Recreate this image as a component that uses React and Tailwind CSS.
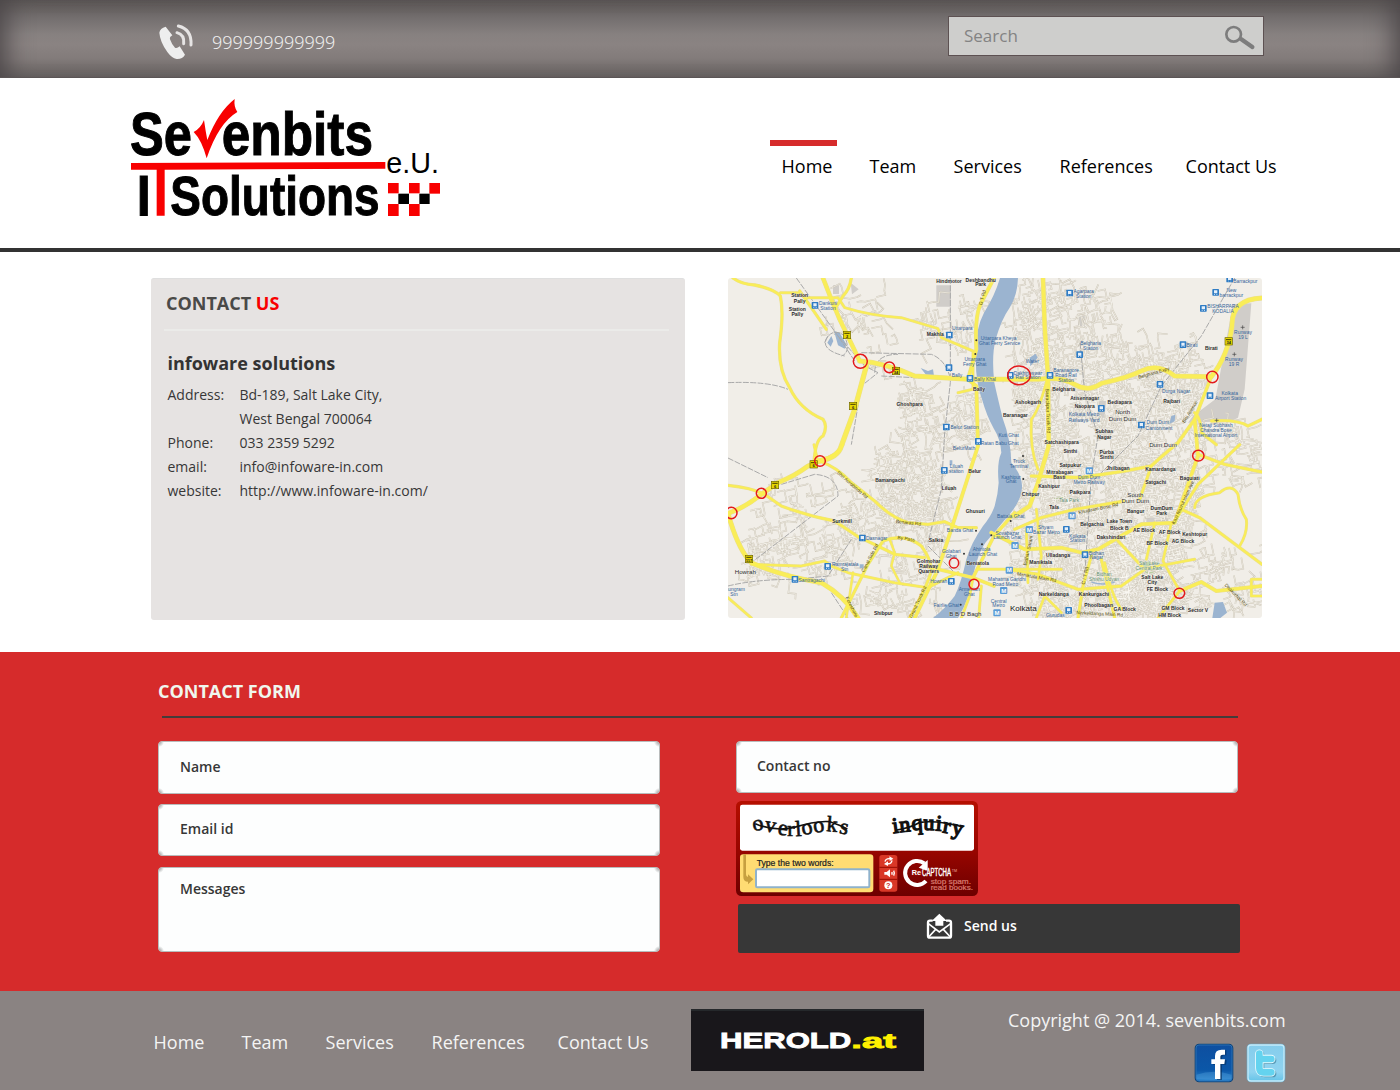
import React from "react";

const SANS = "'Liberation Sans', Arial, sans-serif";

function Logo() {
  return (
    <svg className="block h-[150px] w-[350px]" viewBox="0 0 1050 450" fontFamily={SANS}>
      <defs>
        <clipPath id="logoClip"><rect x="63" y="50" width="927" height="358" /></clipPath>
      </defs>
      <g clipPath="url(#logoClip)">
        <g fontWeight="bold" fontSize="184" fill="#000" stroke="#000" strokeWidth="3">
          <text x="60" y="226" textLength="186" lengthAdjust="spacingAndGlyphs">Se</text>
          <text x="335" y="226" textLength="454" lengthAdjust="spacingAndGlyphs">enbits</text>
          <text x="80" y="407" fontSize="174" textLength="42" lengthAdjust="spacingAndGlyphs">I</text>
          <text x="181" y="405" fontSize="169" textLength="628" lengthAdjust="spacingAndGlyphs">Solutions</text>
        </g>
        <path d="M251 156 Q272 145 282 120 Q287 155 292 180 Q325 95 374 57 Q371 80 382 96 Q325 130 290 235 Q275 180 251 156Z" fill="#f80000" />
        <path d="M63 249 L826 246 V266 L164 269 V407 H140 V269 H63Z" fill="#f80000" />
        <text x="829" y="280" fontSize="86" textLength="158" lengthAdjust="spacingAndGlyphs">e.U.</text>
        <g fill="#f80000">
          <rect x="834" y="309" width="32" height="31" /><rect x="897" y="309" width="32" height="31" /><rect x="958" y="309" width="32" height="32" />
          <rect x="834" y="372" width="32" height="36" /><rect x="897" y="372" width="32" height="36" />
        </g>
        <g fill="#000"><rect x="865" y="341" width="32" height="31" /><rect x="928" y="341" width="31" height="31" /></g>
      </g>
    </svg>
  );
}

// Map space: 1602 x 1020, three units to a screen pixel.
const STREET_ZONES = [
  [510, 320, 740, 510, 80], [400, 560, 640, 760, 80], [30, 760, 330, 900, 70], [330, 700, 640, 990, 90],
  [580, 70, 740, 220, 30], [400, 60, 500, 300, 10], [850, 20, 960, 1010, 190], [930, 40, 1150, 500, 180],
  [930, 500, 1200, 1010, 300], [1140, 200, 1400, 520, 190], [1200, 520, 1390, 760, 130], [1110, 760, 1370, 1010, 180],
  [1370, 800, 1600, 1000, 40], [430, 500, 620, 640, 40], [280, 60, 400, 160, 15], [1360, 420, 1590, 620, 50], [60, 590, 380, 760, 30],
];

function makeStreets() {
  let seed = 17;
  const rnd = () => { seed = (seed * 16807) % 2147483647; return seed / 2147483647; };
  let d = "";
  for (const [x0, y0, x1, y1, n] of STREET_ZONES) {
    for (let i = 0; i < n; i++) {
      let x = x0 + rnd() * (x1 - x0), y = y0 + rnd() * (y1 - y0);
      let a = -0.2 + (rnd() > 0.5 ? Math.PI / 2 : 0);
      d += `M${x.toFixed(0)} ${y.toFixed(0)}`;
      for (let k = 0; k < 4; k++) {
        const l = 8 + rnd() * 26;
        x += Math.cos(a) * l; y += Math.sin(a) * l;
        d += `L${x.toFixed(0)} ${y.toFixed(0)}`;
        a += (rnd() > 0.5 ? 1 : -1) * (rnd() > 0.3 ? Math.PI / 2 : 0.3);
      }
    }
  }
  return d;
}
const STREETS = makeStreets();

const RIVER = "M816 6 Q800 60 768 110 Q742 160 744 230 Q740 310 762 370 Q776 420 796 455 Q818 490 820 530 Q806 560 812 620 Q810 655 800 690 Q790 720 765 750 Q730 800 715 850 Q700 920 680 960 Q650 1000 615 1026 H690 Q725 970 735 900 Q750 830 772 800 Q815 750 838 722 Q878 680 882 635 Q884 600 850 560 Q848 490 825 430 Q810 370 799 320 Q790 240 803 190 Q820 130 845 95 Q868 60 870 6Z";

const ROADS = [
  ["M15 6 Q40 25 80 27 Q140 40 157 60 Q168 110 155 200 Q150 280 185 335 Q215 400 285 430 Q300 450 285 480 Q262 490 258 560", 9],
  ["M285 6 L310 70 L335 130 L395 255", 13],
  ["M370 6 Q365 40 345 60 L320 100", 9],
  ["M157 50 H210 L230 65 H330 L350 95 Q430 120 520 125 L630 158 L640 185 L735 225", 8],
  ["M215 45 L250 95 L295 160", 9],
  ["M395 255 Q470 260 560 300 L720 310 H930 Q1000 300 1040 325 Q1080 350 1120 322 Q1200 305 1240 285 Q1290 260 1340 300 L1450 302 Q1500 240 1512 150 Q1510 70 1602 66", 14],
  ["M415 270 L380 400 L340 510 Q330 545 275 555", 15],
  ["M275 555 L240 570 Q200 600 150 620 L100 655 Q50 695 0 712 Q30 820 70 860 Q160 900 280 920 Q350 960 390 1026", 14],
  ["M275 555 Q330 575 370 620 L440 675 Q490 725 540 740 L600 745 L650 737 L690 755 H745", 9],
  ["M0 628 Q70 635 110 655 L160 690 Q240 720 320 735 L390 782 Q440 805 500 835 L590 845", 9],
  ["M70 865 L220 870 L290 855 L310 870 L360 890 L500 920 L600 935 L690 890", 8],
  ["M340 1026 L420 865 L465 795 Q530 770 580 810 Q610 850 610 885 Q600 925 545 1026", 9],
  ["M355 1026 L375 890 M485 790 L500 830 L490 870 L515 920", 7],
  ["M798 6 Q775 50 755 90 Q740 130 745 220 L720 310 L745 330 L750 510 L660 790 L630 880 L560 1026", 11],
  ["M735 230 L735 340 L690 350", 8],
  ["M945 6 L950 150 L960 300 L962 510 L930 620 L905 690 L860 720", 13],
  ["M960 300 Q935 400 910 430 Q905 520 930 580", 8],
  ["M590 870 L735 905 L798 930 M735 905 L798 780 L860 710", 10],
  ["M735 905 L725 960 L700 1026 M750 880 H1000 M760 930 L752 1026", 8],
  ["M910 600 L1060 605 L1190 585 L1270 570 Q1290 550 1350 500 L1400 430 L1450 302", 10],
  ["M860 760 L940 725 L1040 700 L1190 675 M1270 570 L1235 670", 9],
  ["M790 770 L890 820 L1000 815 L1060 830 L1110 820 L1240 745 L1340 740 L1410 540 L1400 430", 11],
  ["M925 700 L940 840 L930 910 M895 760 L900 920", 8],
  ["M840 880 L930 895 L1050 940 L1180 930 L1250 880 L1170 795", 9],
  ["M1090 840 L1065 930 L1050 1026 M1120 850 L1160 1026", 9],
  ["M1240 880 L1400 850 M1280 740 L1255 850 M1330 740 L1305 855 L1355 945 L1290 1026", 8],
  ["M1355 945 L1420 918 L1465 945 L1602 930", 11],
  ["M1340 735 L1410 625 L1535 506 M1410 535 L1490 565 L1602 588", 9],
  ["M1360 700 L1415 725 L1602 865", 9],
  ["M1400 695 Q1400 660 1475 650 Q1510 620 1530 655 Q1535 700 1555 730 Q1560 770 1535 810", 8],
  ["M1400 410 Q1420 430 1420 470 L1465 506", 9],
  ["M1450 435 Q1530 430 1560 450 L1602 430", 9],
  ["M1602 910 H1570 V960 H1602 M258 506 L268 550 M345 506 Q325 540 280 550", 8],
  ["M0 965 L70 1026 M925 1026 L950 960 L1000 1010 M1130 860 Q1150 960 1180 1000", 8],
];

const RAILS = [
  "M205 6 L330 180 L380 255 M330 180 L410 270 L450 290 L400 330 L370 506",
  "M667 6 V320 L650 470 L640 640 L600 800 M400 230 L610 235 Q650 250 665 300",
  "M290 200 Q310 150 350 180 Q370 230 340 240 M300 180 Q270 220 350 240 M440 290 Q440 235 510 235",
  "M0 546 L120 605 M160 625 L260 595 Q330 600 330 660 L70 860 M0 930 Q80 910 200 910 L300 900 L370 790",
  "M1056 200 L1070 350 L1110 480 L1090 600 L1070 900 L1055 1026",
  "M1520 6 L1420 180 L1300 330 L1230 480 L1090 620",
  "M600 810 L690 900 M460 300 L560 305 L720 312 M0 320 Q120 315 180 340 M310 950 L360 1026",
];

// Each label: x, y of its baseline centre, text, kind (s station, p place, m/b larger place, r road, g park), rotation
const LABELS = [
  [215, 63, "Station", "p"], [215, 80, "Pally", "p"], [208, 104, "Station", "p"], [208, 119, "Pally", "p"],
  [300, 86, "Dankuni", "s"], [300, 102, "Station", "s"], [663, 22, "Hindmotor", "p"], [758, 17, "Deshbandhu", "p"], [758, 30, "Park", "p"],
  [768, 66, "G T Rd", "r", -75], [622, 180, "Makhla", "p"], [703, 163, "Uttarpara", "s"], [812, 191, "Uttarpara Kheya", "s"], [815, 206, "Ghat Ferry Service", "s"],
  [740, 256, "Uttarpara", "s"], [740, 271, "Ferry Ghat", "s"], [687, 303, "Bally", "s"], [771, 315, "Bally Khal", "s"], [753, 346, "Bally", "p"],
  [545, 390, "Ghoshpara", "p"], [710, 459, "Belur Station", "s"],
  [1067, 51, "Agarpara", "s"], [1067, 66, "Station", "s"], [1552, 21, "Barrackpur", "s"], [1510, 48, "New", "s"], [1510, 63, "barrackpur", "s"],
  [1485, 95, "BISHARPARA", "s"], [1485, 111, "KODALIA", "s"], [1545, 175, "Runway", "s"], [1545, 189, "19 L", "s"], [1518, 256, "Runway", "s"], [1518, 270, "19 R", "s"],
  [1088, 207, "Belgharia", "s"], [1088, 222, "Station", "s"], [1392, 214, "Birati", "s"], [1450, 223, "Birati", "p"], [913, 260, "Water", "s"],
  [900, 296, "Dakhineswar", "s"], [900, 310, "Rail Station", "s"], [1014, 288, "Baranagore", "s"], [1014, 303, "Road Rail", "s"], [1014, 318, "Station", "s"],
  [1007, 345, "Belgharia", "p"], [900, 385, "Ashokgarh", "p"], [862, 424, "Baranagar", "p"], [842, 482, "Kuti Ghat", "s"], [815, 506, "Ratan Babu Ghat", "s"],
  [1070, 371, "Atisennagar", "p"], [1070, 397, "Naopara", "p"], [1068, 421, "Kolkata Metro", "s"], [1068, 437, "Railways Yard", "s"], [1175, 383, "Bediapara", "p"],
  [1184, 414, "North", "m"], [1184, 434, "Dum Dum", "m"], [1129, 472, "Subhas", "p"], [1129, 488, "Nagar", "p"], [1001, 504, "Satchashipara", "p"],
  [1289, 445, "Dum Dum", "s"], [1293, 462, "Cantonment", "s"], [1344, 351, "Durga Nagar", "s"], [1331, 381, "Rajbari", "p"], [1505, 357, "Kolkata", "s"], [1508, 371, "Airport Station", "s"],
  [1464, 454, "Netaji Subhash", "s"], [1464, 469, "Chandra Bose", "s"], [1464, 484, "International Airport", "s"], [1305, 512, "Dum Dum", "m"],
  [1279, 295, "Belgharia Expy", "r", -16], [955, 405, "Barrackpur Trunk Rd", "r", 88], [1390, 410, "Bisi Avenue", "r", -58],
  [708, 521, "BelurMath", "s"], [740, 591, "Belur", "p"], [685, 577, "Liluah", "s"], [685, 592, "station", "s"], [663, 641, "Liluah", "p"],
  [486, 618, "Bamangachi", "p"], [370, 630, "Shri Aurobindo Rd", "r", 41], [342, 741, "Surkmill", "p"], [742, 710, "Ghusuri", "p"], [541, 745, "Benaras Rd", "r", 6],
  [696, 768, "Banda Ghat", "s"], [446, 791, "Dasnagar", "s"], [534, 793, "By Pass", "r", 8], [624, 799, "Salkia", "p"], [430, 848, "Canal Side Rd", "r", -62],
  [602, 860, "Golmohar", "p"], [602, 876, "Railway", "p"], [602, 892, "Quarters", "p"], [670, 832, "Golabari", "s"], [670, 847, "Ghat", "s"],
  [761, 826, "Ahiritola", "s"], [765, 841, "Launch Ghat", "s"], [749, 867, "Beniatola", "p"], [352, 870, "Ramrajatala", "s"], [350, 885, "Stn", "s"],
  [52, 893, "Howrah", "m"], [251, 917, "Santragachi", "s"], [18, 944, "Jaungram", "s"], [18, 959, "Stn", "s"], [632, 922, "Howrah", "s"], [724, 945, "Armenian", "s"], [724, 960, "Ghat", "s"],
  [574, 980, "Grand Trunk Rd", "r", -65], [655, 992, "Fairlie Ghat", "s"], [466, 1018, "Shibpur", "p"], [712, 1021, "B B D Bagh", "m"],
  [1027, 530, "Sinthi", "p"], [1136, 533, "Purba", "p"], [1136, 549, "Sinthi", "p"], [1027, 572, "Satpukur", "p"], [995, 595, "Mitrabagan", "p"], [994, 610, "Basti", "p"],
  [873, 561, "Truck", "s"], [873, 575, "Terminal", "s"], [849, 608, "Kashipur", "s"], [849, 622, "Ghat", "s"], [963, 635, "Kashipur", "p"], [908, 661, "Chitpur", "p"],
  [1083, 610, "Dum Dum", "s"], [1083, 624, "Metro Railway", "s"], [1170, 581, "Jhilbagan", "p"], [1297, 586, "Kamardanga", "p"], [1283, 623, "Satgachi", "p"], [1385, 611, "Baguiati", "p"],
  [1056, 654, "Paikpara", "p"], [1222, 662, "South", "m"], [1222, 681, "Dum Dum", "m"], [1023, 679, "Tala Park", "g"], [978, 699, "Tala", "p"], [1112, 702, "Khudiram Bose Rd", "r", -12],
  [1223, 710, "Bangur", "p"], [1301, 701, "DumDum", "p"], [1301, 717, "Park", "p"], [848, 725, "Battala Ghat", "s"], [1092, 750, "Belgachia", "p"], [1174, 741, "Lake Town", "p"], [1174, 762, "Block B", "p"],
  [953, 760, "Shyam", "s"], [955, 775, "Bazar Metro", "s"], [1048, 785, "Kolkata", "s"], [1048, 799, "Station", "s"], [838, 776, "Sovabazar", "s"], [838, 790, "Launch Ghat", "s"],
  [1149, 789, "Dakshindari", "p"], [1248, 769, "AE Block", "p"], [1325, 774, "AF Block", "p"], [1400, 779, "Keshtopur", "p"], [1288, 807, "BF Block", "p"], [1365, 801, "AG Block", "p"],
  [990, 842, "Ulladanga", "p"], [1105, 836, "Bidhan", "s"], [1105, 850, "Nagar", "s"], [938, 864, "Maniktala", "p"], [1128, 899, "Bidhan", "g"], [1128, 914, "Shishu Udyan", "g"],
  [1263, 868, "Salt Lake", "g"], [1263, 883, "Central Park", "g"], [1273, 908, "Salt Lake", "p"], [1273, 924, "City", "p"], [1288, 945, "FE Block", "p"],
  [925, 908, "Maniktala Main Rd", "r", 10], [837, 915, "Mahatma Gandhi", "s"], [832, 930, "Road Metro", "s"], [977, 960, "Narkeldanga", "p"], [1098, 959, "Kankurgachi", "p"],
  [1076, 900, "C I T Rd", "r", -77], [1369, 682, "Kazi Nazrul Islam Ave", "r", -65], [886, 1005, "Kolkata", "b"], [1112, 992, "Phoolbagan", "p"], [1190, 1005, "GA Block", "p"],
  [1335, 1002, "GM Block", "p"], [1410, 1008, "Sector V", "p"], [982, 1022, "Gurudas", "s"], [1115, 1018, "Narkeldanga Main Rd", "r", 3], [1325, 1022, "HM Block", "p"], [812, 980, "Central", "s"], [812, 994, "Metro", "s"],
  [905, 825, "Bidhan Sarani", "r", -78], [1520, 960, "Dhakurhat Rd", "r", 45], [367, 995, "Foreshore", "r", 63],
];

const LABEL_FILL = { s: "#35649a", p: "#2b2b2b", m: "#2b2b2b", b: "#111", r: "#574f14", g: "#5a8a6c" };
const LABEL_SIZE = { s: 14.8, p: 15, m: 18.5, b: 24, r: 14.5, g: 14.5 };

const STATIONS = [
  [261, 88], [664, 177], [663, 275], [726, 307], [655, 453], [751, 496], [1025, 51], [1463, 49], [1505, 9], [1426, 97], [1055, 236], [1365, 206], [847, 298], [966, 298],
  [1120, 397], [1240, 447], [1296, 325], [1446, 359], [649, 583], [403, 786], [299, 871], [201, 910], [670, 916], [1015, 760], [1071, 836], [1022, 1003],
];
const METROS = [[1084, 584], [1032, 719], [904, 760], [861, 808], [844, 882], [827, 943], [807, 1010]];
const SHIELDS = [[357, 177, "2"], [504, 285, "34"], [375, 390, "6"], [1502, 196, "34"], [257, 565, "6"], [141, 627, "6"], [63, 849, "117"]];
const RINGS = [[397, 256, 21, 21], [484, 274, 16, 16], [873, 298, 34, 28], [1453, 303, 17, 17], [1411, 539, 17, 16], [276, 555, 16, 16], [100, 652, 15, 15], [10, 711, 17, 17], [678, 861, 14, 15], [738, 925, 15, 15], [1354, 952, 16, 15]];

function CityMap() {
  return (
    <svg className="block h-[340px] w-[534px] rounded-[3px]" viewBox="0 6 1602 1020" fontFamily={SANS}>
      <rect y="6" width="1602" height="1020" fill="#f1eee8" />
      <g fill="#d0cdc9">
        <path d="M1515 85 L1570 82 L1550 340 L1530 425 L1510 435 L1380 440 L1395 420 L1462 370Z" />
        <path d="M625 28h44v64h-44z M315 28h18v26h-18z M368 20l24 20-20 15z M1050 120l20 0v35l-20-8z M1108 375h26l-4 50h-20z M1255 725h70v18h-70z" />
      </g>
      <path d="M1025 680h35v28h-35z" fill="#ddd0ae" />
      <g fill="#b8d3a0"><path d="M978 660h40v16h-40z M1236 857h62l4 22-30 18-36-12z" /></g>
      <path d={STREETS} fill="none" stroke="#c8c1b1" strokeWidth="4.6" />
      <path d={STREETS} fill="none" stroke="#fbfaf5" strokeWidth="1.8" />
      <g fill="#9bb4d0">
        <path d={RIVER} />
        <path d="M318 165 L335 170 L355 205 L350 218 L330 208Z M298 200 L310 180 L316 195 L308 212Z M578 276 L600 285 L615 280 L618 300 L595 298Z" />
        <path d="M905 245l18-12 6 12-22 26z M1330 420l12-4-2 20-16 8z M1460 980 l25 -2 12 32 -20 16 h-24z M395 865h12v12h-12z M665 553h8v15h-8z M1090 916 q30 12 70 0 v4 q-35 12 -70 0z" />
      </g>
      <g fill="none" stroke="#a9a9a9" strokeWidth="3">
        {RAILS.map((d, i) => <path key={i} d={d} strokeDasharray="18 4" />)}
      </g>
      <g fill="none" strokeLinejoin="round" strokeLinecap="round">
        {ROADS.map(([d, w], i) => <path key={i} d={d} stroke="#ebdf8a" strokeWidth={w + 1} />)}
        {ROADS.map(([d, w], i) => <path key={i} d={d} stroke="#fcf04f" strokeWidth={w - 2} strokeOpacity=".85" />)}
      </g>
      {SHIELDS.map(([x, y, n], i) => (
        <g key={i}>
          <rect x={x - 11} y={y - 11} width="22" height="22" fill="#e6d500" stroke="#6d6500" strokeWidth="2" />
          <path d={`M${x - 8} ${y - 5}h16`} stroke="#443f00" strokeWidth="3" />
          <text x={x} y={y + 9} fontSize="12" fontWeight="bold" textAnchor="middle" fill="#222">{n}</text>
        </g>
      ))}
      {STATIONS.map(([x, y], i) => (
        <g key={i}>
          <rect x={x - 10} y={y - 10} width="20" height="20" rx="2" fill="#2f7cc4" />
          <path d={`M${x - 5} ${y - 6}h10v9h-10z M${x - 5} ${y + 5}h3v2h-3z M${x + 2} ${y + 5}h3v2h-3z`} fill="#e6f0fa" />
        </g>
      ))}
      {METROS.map(([x, y], i) => (
        <g key={i}>
          <rect x={x - 11} y={y - 10} width="22" height="21" rx="3" fill="#5b9bd5" />
          <text x={x} y={y + 7} fontSize="18" fontWeight="bold" textAnchor="middle" fill="#fff">M</text>
        </g>
      ))}
      <g fill="#333">
        {[[745, 193], [742, 234], [744, 764], [708, 833], [762, 805], [790, 778], [885, 540], [886, 609], [698, 986], [848, 735]].map(([x, y], i) => <circle key={i} cx={x} cy={y} r="3" />)}
      </g>
      <path d="M1538 154h12m-6-6v12 M1513 235h12m-6-6v12 M1460 433h12m-6-6v12" stroke="#444" strokeWidth="2" />
      <g textAnchor="middle" stroke="#f6f4ee" strokeWidth="2" strokeOpacity=".8" paintOrder="stroke">
        {LABELS.map(([x, y, t, k, r], i) => (
          <text key={i} x={x} y={y} fontSize={LABEL_SIZE[k]} fill={LABEL_FILL[k]} fontWeight={k === "p" ? "bold" : "normal"} stroke={k === "r" || k === "s" ? "none" : undefined} transform={r ? `rotate(${r} ${x} ${y})` : undefined}>{t}</text>
        ))}
      </g>
      <g fill="none" stroke="#e3191c" strokeWidth="4.5">
        {RINGS.map(([x, y, rx, ry], i) => <ellipse key={i} cx={x} cy={y} rx={rx} ry={ry} />)}
      </g>
    </svg>
  );
}

const OVERLOOKS = [["o", 70, 288, -8], ["v", 102, 288, 10], ["e", 142, 298, 8], ["r", 172, 304, 0], ["l", 197, 304, -4], ["o", 218, 301, -12], ["o", 253, 294, -10], ["k", 288, 288, 5], ["s", 326, 294, 12]];
const INQUIRY = [["i", 490, 295, -8], ["n", 510, 292, -6], ["q", 546, 286, -4], ["u", 580, 284, 2], ["i", 616, 286, 5], ["r", 636, 292, 10], ["y", 664, 297, 10]];

function Captcha() {
  return (
    <svg className="block h-[95px] w-[242px]" viewBox="18 198 726 285" fontFamily={SANS}>
      <defs>
        <linearGradient id="capBg" x1="0" y1="0" x2="0" y2="1"><stop offset="0" stopColor="#b50f00" /><stop offset=".55" stopColor="#960500" /><stop offset="1" stopColor="#6d0000" /></linearGradient>
      </defs>
      <rect x="18" y="198" width="726" height="285" rx="16" fill="url(#capBg)" />
      <rect x="30" y="209" width="702" height="138" rx="7" fill="#fff" />
      <g fontFamily="'Liberation Serif', serif" fill="#111" stroke="#111">
        <g fontSize="66" strokeWidth="2">{OVERLOOKS.map(([c, x, y, r], i) => <text key={i} x={x} y={y} transform={`rotate(${r} ${x} ${y})`}>{c}</text>)}</g>
        <g fontSize="66" strokeWidth="4">{INQUIRY.map(([c, x, y, r], i) => <text key={i} x={x} y={y} transform={`rotate(${r} ${x} ${y})`}>{c}</text>)}</g>
      </g>
      <path d="M76 266 Q130 290 190 278 Q260 256 300 260 Q330 270 352 282 M495 286 Q540 280 570 262 Q620 255 700 276" fill="none" stroke="#111" strokeWidth="5" />
      <rect x="30" y="358" width="400" height="114" rx="10" fill="#ffdc73" />
      <path d="M40 358 V425 Q40 440 54 440 V448 L70 433 L54 418 V426 Q48 426 48 418 V358Z" fill="#c7a040" />
      <text x="80" y="392" fontSize="26" fill="#222" stroke="#222" strokeWidth=".6" textLength="231" lengthAdjust="spacingAndGlyphs">Type the two words:</text>
      <rect x="78" y="403" width="340" height="54" rx="4" fill="#fff" stroke="#8fb2cc" strokeWidth="6" />
      <rect x="448" y="360" width="54" height="110" rx="8" fill="#d93827" />
      <path d="M448 397h54M448 433h54" stroke="#980c00" strokeWidth="3" />
      <g fill="none" stroke="#fff" strokeWidth="4">
        <path d="M465 380 q2 -10 15 -9 M486 376 q-2 12 -15 10" />
        <path d="M491 407q4 7 0 15" />
      </g>
      <path d="M478 364l12 7-11 7z M474 379l-12 8 12 6z M463 411h7l10-8v24l-10-8h-7z M484 411h4v8h-4z" fill="#fff" />
      <circle cx="475" cy="451" r="12" fill="#fff" />
      <text x="475" y="459" fontSize="22" fontWeight="bold" textAnchor="middle" fill="#c92a1a">?</text>
      <path d="M583 385 A36 36 0 1 0 588 438" fill="none" stroke="#fff" strokeWidth="12" />
      <path d="M593 375 V407 L566 398Z" fill="#fff" />
      <path d="M544 402h34v20h-34z" fill="#910500" />
      <text x="545" y="420" fontSize="20" fontWeight="bold" fill="#fff" textLength="28" lengthAdjust="spacingAndGlyphs">Re</text>
      <text x="576" y="424" fontSize="30" fill="#fff" stroke="#fff" strokeWidth="1.2" textLength="87" lengthAdjust="spacingAndGlyphs">CAPTCHA</text>
      <text x="665" y="411" fontSize="11" fill="#eba59c">TM</text>
      <g fontSize="21" fill="#d97b70" stroke="#d97b70" strokeWidth=".6">
        <text x="602" y="446" textLength="121" lengthAdjust="spacingAndGlyphs">stop spam.</text>
        <text x="602" y="465" textLength="127" lengthAdjust="spacingAndGlyphs">read books.</text>
      </g>
    </svg>
  );
}

function Herold() {
  return (
    <svg className="block h-[62px] w-[233px] bg-[#19171b]" viewBox="33 72 699 186" fontFamily={SANS} fontWeight="bold">
      <rect x="33" y="72" width="699" height="6" fill="#25282b" />
      <g strokeWidth="2.5">
        <text x="120" y="190" fontSize="66" fill="#fff" stroke="#fff" textLength="394" lengthAdjust="spacingAndGlyphs">HEROLD</text>
        <text x="514" y="190" fontSize="62" fill="#fff000" stroke="#fff000" textLength="134" lengthAdjust="spacingAndGlyphs">.at</text>
      </g>
    </svg>
  );
}

function Facebook() {
  return (
    <svg className="block size-10" viewBox="0 0 120 120">
      <defs><linearGradient id="fb" x1="0" y1="0" x2="0" y2="1"><stop offset="0" stopColor="#0e4fa0" /><stop offset=".7" stopColor="#0b57a8" /><stop offset="1" stopColor="#2d87cf" /></linearGradient></defs>
      <rect x="2" y="2" width="116" height="116" rx="13" fill="#0c4378" />
      <rect x="6" y="6" width="108" height="108" rx="9" fill="url(#fb)" stroke="#2a70b4" strokeWidth="3" />
      <path d="M7 95 Q60 78 113 95 V108 Q60 112 7 108Z" fill="#5aa6df" opacity=".35" />
      <path d="M65 109 V63 H53 V49 H65 V39 Q65 20 84 20 H93 V35 H87 Q80 35 80 42 V49 H94 L92 63 H80 V109Z" fill="#072d58" opacity=".6" transform="translate(4 2)" />
      <path d="M63 108 V63 H52 V49 H63 V39 Q63 20 83 20 H93 V35 H87 Q79 35 79 42 V49 H93 L91 63 H79 V108Z" fill="#fff" />
    </svg>
  );
}

function Twitter() {
  return (
    <svg className="block size-10" viewBox="0 0 120 120">
      <defs>
        <linearGradient id="tw" x1="0" y1="0" x2="0" y2="1"><stop offset="0" stopColor="#85cdec" /><stop offset=".75" stopColor="#8fd3f0" /><stop offset="1" stopColor="#66c4e8" /></linearGradient>
      </defs>
      <rect x="2" y="2" width="116" height="116" rx="13" fill="#6cabc8" />
      <rect x="6" y="6" width="108" height="108" rx="9" fill="url(#tw)" stroke="#c4ebfa" strokeWidth="4" />
      <path d="M40 48H76 M40 32V75Q40 88 53 88H76" fill="none" stroke="#43819c" strokeWidth="22" strokeLinecap="round" transform="translate(4 4)" opacity=".7" />
      <path d="M40 48H76 M40 32V75Q40 88 53 88H76" fill="none" stroke="#e9fbff" strokeWidth="25" strokeLinecap="round" />
      <path d="M40 48H76 M40 32V75Q40 88 53 88H76" fill="none" stroke="#64d3ef" strokeWidth="20" strokeLinecap="round" />
    </svg>
  );
}

function Field({ className, children }) {
  return (
    <div className={`w-[502px] rounded-[4px] border border-[#b9bcbc] bg-[#fdfefe] bg-[radial-gradient(circle_at_0_0,#9a9c9c,transparent_5px),radial-gradient(circle_at_100%_0,#9a9c9c,transparent_5px),radial-gradient(circle_at_0_100%,#9a9c9c,transparent_5px),radial-gradient(circle_at_100%_100%,#9a9c9c,transparent_5px)] text-[14px] leading-6 font-semibold text-[#373737] ${className}`}>{children}</div>
  );
}

function Links({ className }) {
  return (
    <nav className={`grid grid-cols-[88px_84px_106px_126px_100px] text-[18px] leading-6 whitespace-nowrap ${className}`}>
      <a>Home</a><a>Team</a><a>Services</a><a>References</a><a>Contact Us</a>
    </nav>
  );
}

const DETAILS = [["Address:", "Bd-189, Salt Lake City,"], ["", "West Bengal 700064"], ["Phone:", "033 2359 5292"], ["email:", "info@infoware-in.com"], ["website:", "http://www.infoware-in.com/"]];

export default function App() {
  return (
    <div className="h-[1090px] w-[1400px] overflow-hidden bg-white font-['Open_Sans','Noto_Sans',sans-serif]">
      <header className="flex h-[78px] items-start border-b border-[#5a5555] bg-[linear-gradient(to_bottom,#5b5655_0%,#757070_25%,#878180_45%,#8a8382_58%,#837c7b_75%,#676261_100%)] pl-[158px] shadow-[inset_24px_0_26px_-18px_#4b4648,inset_-24px_0_26px_-18px_#4b4648]">
        <svg className="mt-[24px] block h-[36px] w-[36px]" viewBox="474 72 108 108">
          <path d="M478 98 Q480 85 497 80 L517 106 Q508 111 510 118 Q515 133 525 143 Q531 146 539 139 L555 164 Q547 178 530 177 Q515 174 502 156 Q480 125 478 98Z" fill="#eee" />
          <path d="M531 98 Q554 104 551 131 M535 78 Q576 88 573 135" fill="none" stroke="#e6e4e4" strokeWidth="9" strokeLinecap="round" />
        </svg>
        <div className="mt-[30px] ml-[18px] w-[736px] text-[18px] leading-6 font-light text-[#f4f4f4]">999999999999</div>
        <div className="mt-4 flex h-10 w-[316px] border border-[#5d5152] bg-[#cececc] pl-[15px]">
          <span className="mt-[7px] w-[260px] text-[17px] leading-6 text-[#838383]">Search</span>
          <svg className="mt-2 block h-[26px] w-[32px]" viewBox="882 75 96 78">
            <circle cx="911" cy="103" r="22" fill="none" stroke="#7d7d7d" strokeWidth="8" />
            <path d="M934 118 L967 141" stroke="#7d7d7d" strokeWidth="13" strokeLinecap="round" />
          </svg>
        </div>
      </header>

      <section className="flex h-[174px] border-b-4 border-[#333] pl-[110px]">
        <div className="mt-[2px]"><Logo /></div>
        <div className="mt-[62px] ml-[310px]">
          <div className="h-[6px] w-[67px] bg-[#d62b2b]" />
          <Links className="mt-[8px] ml-[11.6px] text-black" />
        </div>
      </section>

      <section className="flex h-[400px] items-start gap-[43px] pt-[26px] pl-[151px]">
        <div className="h-[342px] w-[534px] rounded-[3px] border-t border-[#dfdfdf] bg-[#e6e3e2] pt-[12px] text-[#373737]">
          <h2 className="ml-[15px] text-[18px] leading-6 font-bold text-[#4a4a48]">CONTACT <span className="text-[#f80000]">US</span></h2>
          <div className="mt-[14px] ml-[13px] h-[2px] w-[505px] bg-[#ebebe9]" />
          <h3 className="mt-[20px] ml-[16.4px] text-[18px] leading-6 font-bold text-[#333]">infoware solutions</h3>
          <dl className="mt-[8px] ml-[16.5px] grid grid-cols-[72px_1fr] text-[14px] leading-6">
            {DETAILS.map(([k, v]) => <React.Fragment key={v}><dt>{k}</dt><dd>{v}</dd></React.Fragment>)}
          </dl>
        </div>
        <CityMap />
      </section>

      <section className="h-[339px] bg-[#d62b2b] pt-[27px] pl-[158px]">
        <h2 className="text-[18px] leading-6 font-bold text-[#f0f7ee]">CONTACT FORM</h2>
        <div className="mt-[13px] ml-1 h-[2px] w-[1076px] bg-[#443c3a]" />
        <div className="mt-[23px] flex gap-[76px]">
          <div>
            <Field className="h-[53px] pt-[13px] pl-[21px]">Name</Field>
            <Field className="mt-[10px] h-[52px] pt-[12px] pl-[21px]">Email id</Field>
            <Field className="mt-[11px] h-[85px] pt-[9px] pl-[21px]">Messages</Field>
          </div>
          <div>
            <Field className="h-[52px] pt-[12px] pl-[20px]">Contact no</Field>
            <div className="mt-2"><Captcha /></div>
            <button className="mt-2 ml-[2px] flex h-[49px] w-[502px] rounded-[2px] bg-[#373737] pl-[188px] text-[14px] leading-6 font-semibold text-white">
              <svg className="mt-[9px] block h-[27px] w-[27px]" viewBox="588 534 81 81">
                <path d="M608 557 H600 Q594 557 594 563 V602 Q594 608 600 608 H657 Q663 608 663 602 V563 Q663 557 657 557 H648" fill="none" stroke="#fff" strokeWidth="7" />
                <path d="M595 566 L628 591 L662 566 M596 606 L617 583 M661 606 L640 583" fill="none" stroke="#fff" strokeWidth="5" />
                <path d="M628 536 L651 558 H640 V572 H616 V558 H605Z" fill="#fff" />
              </svg>
              <span className="mt-[10px] ml-[11px]">Send us</span>
            </button>
          </div>
        </div>
      </section>

      <footer className="flex h-[99px] items-start bg-[#8a8382] pl-[153px] text-[#f4f4f4]">
        <div className="w-[538px] pl-[0.6px]"><Links className="mt-[39px]" /></div>
        <div className="mt-[18px]"><Herold /></div>
        <div className="mt-[17px] ml-[84px] w-[279px]">
          <p className="text-[18px] leading-6 whitespace-nowrap">Copyright @ 2014. sevenbits.com</p>
          <div className="mt-[11px] mr-px flex justify-end gap-3"><Facebook /><Twitter /></div>
        </div>
      </footer>
    </div>
  );
}
